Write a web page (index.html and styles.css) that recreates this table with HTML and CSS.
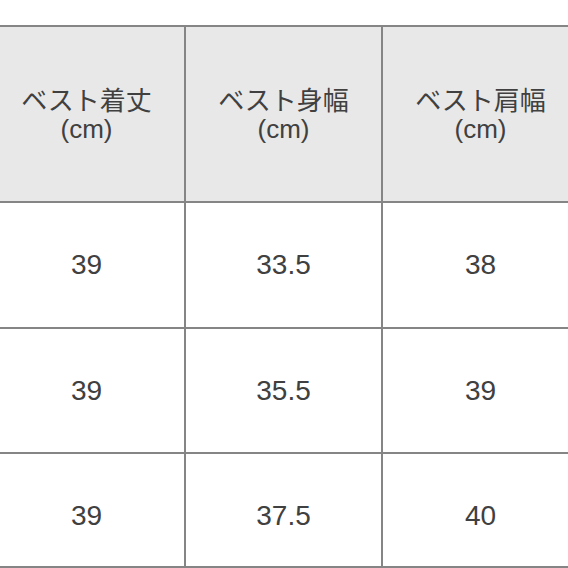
FILE: index.html
```html
<!DOCTYPE html>
<html lang="ja">
<head>
<meta charset="utf-8">
<link rel="stylesheet" href="styles.css">
</head>
<body>
<div class="sheet">
  <div class="cell head">ベスト着丈<br>(cm)</div>
  <div class="cell head">ベスト身幅<br>(cm)</div>
  <div class="cell head">ベスト肩幅<br>(cm)</div>
  <div class="cell">39</div>
  <div class="cell">33.5</div>
  <div class="cell">38</div>
  <div class="cell">39</div>
  <div class="cell">35.5</div>
  <div class="cell">39</div>
  <div class="cell last">39</div>
  <div class="cell last">37.5</div>
  <div class="cell last">40</div>
</div>
</body>
</html>
```
FILE: styles.css
```css
html, body {
  margin: 0;
  padding: 0;
  background: #ffffff;
  overflow: hidden;
  width: 568px;
  height: 568px;
}
.sheet {
  display: grid;
  grid-template-columns: 195px 195px 195px;
  grid-template-rows: 174px 124px 123px 112px;
  gap: 2px;
  padding: 2px;
  background: #858585;
  width: max-content;
  margin-top: 25px;
  margin-left: -13px;
}
.cell {
  background: #ffffff;
  display: flex;
  align-items: center;
  justify-content: center;
  text-align: center;
  font-family: "Liberation Sans", "Noto Sans CJK JP", sans-serif;
  font-size: 28px;
  color: #404040;
}
.head {
  background: #e8e8e8;
  font-size: 26px;
  line-height: 28px;
  padding-top: 2px;
  box-sizing: border-box;
}
.last {
  padding-top: 12px;
  box-sizing: border-box;
}
```
